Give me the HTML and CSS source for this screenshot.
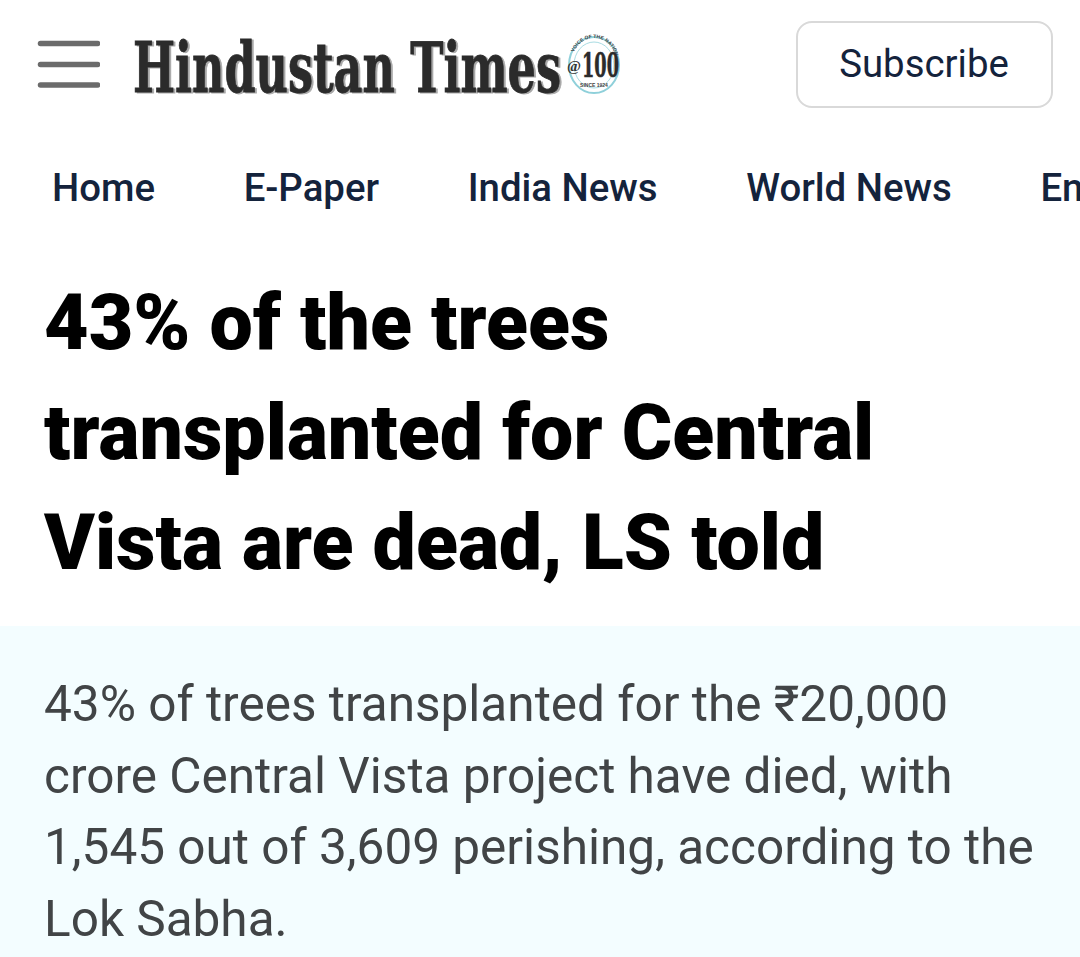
FILE: index.html
```html
<!DOCTYPE html>
<html lang="en">
<head>
<meta charset="utf-8">
<title>Hindustan Times</title>
<link rel="stylesheet" href="styles.css">
</head>
<body>
<header class="top">
  <div class="brand">
    <svg class="burger" width="64" height="50" viewBox="0 0 64 50" aria-hidden="true">
      <g stroke="#6b6b6b" stroke-width="5.5" stroke-linecap="round">
        <line x1="4.5" y1="3.5" x2="61.5" y2="3.5"/>
        <line x1="4.5" y1="24.5" x2="61.5" y2="24.5"/>
        <line x1="4.5" y1="45" x2="61.5" y2="45"/>
      </g>
    </svg>
    <div class="logo">
      <svg class="wordmark" width="430" height="62" viewBox="0 0 430 62" role="img" aria-label="Hindustan Times">
        <text class="wordmark-text" x="0" y="58" textLength="428" lengthAdjust="spacingAndGlyphs">Hindustan Times</text>
      </svg>
      <svg class="seal" width="54" height="62" viewBox="0 0 54 62" aria-hidden="true">
        <ellipse cx="27" cy="31" rx="25" ry="28" fill="#fff" stroke="#8fd0da" stroke-width="2"/>
        <ellipse cx="27" cy="31" rx="20" ry="23" fill="none" stroke="#a9dce3" stroke-width="1"/>
        <path id="sealTop" d="M5 28a22 24 0 0 1 44 0" fill="none"/>
        <text class="seal-small"><textPath href="#sealTop" startOffset="10">VOICE OF THE NATION</textPath></text>
        <text class="seal-small" x="27" y="53" text-anchor="middle">SINCE 1924</text>
        <text class="seal-at" x="0" y="37">@</text>
        <text class="seal-num" x="15" y="43" textLength="37" lengthAdjust="spacingAndGlyphs">100</text>
      </svg>
    </div>
  </div>
  <a class="subscribe" href="#">Subscribe</a>
</header>
<nav class="nav">
  <a href="#">Home</a>
  <a href="#">E-Paper</a>
  <a href="#">India News</a>
  <a href="#">World News</a>
  <a href="#">En</a>
</nav>
<h1 class="headline">43% of the trees<br>transplanted for Central<br>Vista are dead, LS told</h1>
<section class="summary">
  <p>43% of trees transplanted for the ₹20,000<br>crore Central Vista project have died, with<br>1,545 out of 3,609 perishing, according to the<br>Lok Sabha.</p>
</section>
</body>
</html>
```
FILE: styles.css
```css
* { box-sizing: border-box; }
html, body { margin: 0; padding: 0; }
body {
  width: 1080px;
  height: 957px;
  overflow: hidden;
  background: #fff;
  font-family: Roboto, "Liberation Sans", sans-serif;
}
a { text-decoration: none; color: inherit; }
.top {
  display: flex;
  justify-content: space-between;
  align-items: flex-start;
  padding: 21px 27px 0 36px;
  height: 126px;
}
.brand {
  display: flex;
  align-items: center;
  gap: 33px;
  height: 88px;
}
.burger { flex: none; }
.logo {
  display: flex;
  align-items: center;
  gap: 4px;
  height: 62px;
}
.wordmark, .seal { flex: none; }
.wordmark-text {
  font-family: "DejaVu Serif Condensed", "Liberation Serif", serif;
  font-weight: 700;
  font-size: 70px;
  fill: #2b2b2b;
  stroke: #2b2b2b;
  stroke-width: 0.8px;
  filter: drop-shadow(2px 1px 0 #a8a8a8);
}
.seal-small { font: 700 5px "Liberation Sans", sans-serif; fill: #444; }
.seal-at { font: 700 15px "Liberation Serif", serif; fill: #333; }
.seal-num { font: 700 34px "DejaVu Serif Condensed", "Liberation Serif", serif; fill: #2b2b2b; stroke: #2b2b2b; stroke-width: 0.6px; }
.subscribe {
  display: flex;
  align-items: center;
  justify-content: center;
  width: 257px;
  height: 87px;
  padding: 0 1px 2px 0;
  border: 2px solid #d9d9d9;
  border-radius: 16px;
  font-size: 38.4px;
  color: #14233c;
}
.nav {
  display: flex;
  gap: 88.6px;
  padding-left: 52px;
  height: 122px;
  padding-top: 37px;
  white-space: nowrap;
  overflow: hidden;
  font-size: 38.4px;
  font-weight: 500;
  line-height: 50px;
  color: #14233c;
}
.headline {
  margin: 0;
  padding: 20px 44px 0;
  height: 378px;
  font-size: 77px;
  font-weight: 900;
  line-height: 110px;
  color: #000;
}
.summary {
  background: #f3fdff;
  padding: 43px 44px 0;
  height: 331px;
}
.summary p {
  margin: 0;
  font-size: 49.5px;
  line-height: 71.5px;
  color: #414446;
}
```
